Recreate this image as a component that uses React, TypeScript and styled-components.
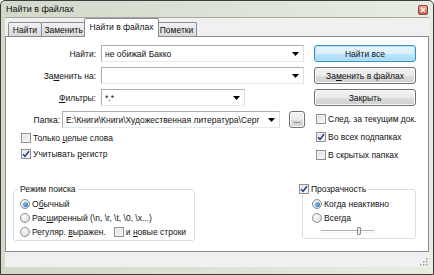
import styled, { createGlobalStyle } from "styled-components";

const GlobalStyle = createGlobalStyle`
  * { box-sizing: border-box; }
  html, body { margin: 0; padding: 0; background: #fff; }
  body { font-family: "Liberation Sans", Arial, sans-serif; font-size: 8.5px; }
`;

const Window = styled.div`
  width: 434px;
  height: 275px;
  border: 1px solid #3b3d3a;
  border-radius: 5px 5px 0 0;
  background: linear-gradient(90deg, #d2d9ca 0%, #dde3d6 55%, #e8ede2 100%);
  display: flex;
  flex-direction: column;
  padding: 0 4px 7px 4px;
  font-family: "Liberation Sans", Arial, sans-serif;
  font-size: 8.5px;
  color: #111;
`;

const TitleBar = styled.div`
  height: 16px;
  display: flex;
  align-items: center;
  justify-content: space-between;
  padding-left: 1px;
  font-size: 9px;
`;

const CloseButton = styled.div`
  width: 10px;
  height: 10px;
  margin-right: 1px;
  margin-top: 2px;
  border: 1px solid #8f4438;
  border-radius: 2px;
  background: linear-gradient(#eaa497, #c9604c);
  display: flex;
  align-items: center;
  justify-content: center;
`;

const Client = styled.div`
  flex: 1;
  background: #f0f0f0;
  border-top: 1px solid #a3aa9f;
  display: flex;
  flex-direction: column;
`;

const TabStrip = styled.div`
  height: 18px;
  display: flex;
  align-items: flex-end;
  padding-left: 3px;
`;

const Tab = styled.div<{ $w: number; $active?: boolean }>`
  width: ${(p) => p.$w}px;
  height: ${(p) => (p.$active ? 19 : 14)}px;
  margin-left: ${(p) => (p.$active ? -2 : -1)}px;
  margin-right: ${(p) => (p.$active ? -2 : 0)}px;
  margin-bottom: ${(p) => (p.$active ? -1 : 0)}px;
  position: relative;
  z-index: ${(p) => (p.$active ? 2 : 1)};
  border: 1px solid #898c95;
  border-bottom: none;
  border-radius: 2px 2px 0 0;
  background: ${(p) =>
    p.$active ? "#fff" : "linear-gradient(#f3f3f3, #e4e4e4 50%, #d9d9d9)"};
  display: flex;
  align-items: center;
  justify-content: center;
  padding-bottom: ${(p) => (p.$active ? 2 : 0)}px;
  white-space: nowrap;
  &:first-child {
    margin-left: 0;
  }
`;

const Panel = styled.div`
  flex: 1;
  background: #fff;
  border: 1px solid #898c95;
  padding: 8px 11px 0 0;
  display: flex;
  flex-direction: column;
`;

const StatusStrip = styled.div`
  height: 15px;
  display: flex;
  justify-content: flex-end;
  align-items: flex-end;
  padding: 0 1px 1px 0;
`;

const TopSection = styled.div`
  display: flex;
`;

const LeftCol = styled.div`
  width: 302px;
  display: flex;
  flex-direction: column;
`;

const RightCol = styled.div`
  width: 102px;
  margin-left: 6px;
  display: flex;
  flex-direction: column;
`;

const Fields = styled.div`
  display: flex;
  flex-direction: column;
  gap: 5px;
`;

const FieldRow = styled.div`
  display: grid;
  grid-template-columns: 90px auto;
  column-gap: 5px;
  height: 17px;
  align-items: center;
`;

const Label = styled.span<{ $w?: number }>`
  text-align: right;
  white-space: nowrap;
  ${(p) => (p.$w ? `width: ${p.$w}px;` : "")}
`;

const Combo = styled.div<{ $w: number }>`
  width: ${(p) => p.$w}px;
  height: 17px;
  border: 1px solid #abadb3;
  border-right-color: #dbdfe6;
  border-bottom-color: #e3e9ef;
  background: #fff;
  display: flex;
  align-items: center;
  padding: 0 4px 0 3px;
  gap: 4px;
`;

const ComboText = styled.span`
  flex: 1;
  overflow: hidden;
  white-space: nowrap;
`;

const FolderRow = styled.div`
  display: flex;
  align-items: center;
  height: 17px;
  gap: 2px;
`;

const Button = styled.div<{ $default?: boolean; $w?: number }>`
  height: 17px;
  ${(p) => (p.$w ? `width: ${p.$w}px;` : "")}
  border: 1px solid ${(p) => (p.$default ? "#3c8fc4" : "#707070")};
  border-radius: 3px;
  background: ${(p) =>
    p.$default
      ? "linear-gradient(#eaf6fd, #d9f0fc 50%, #bee6fd 51%, #a7d9f5)"
      : "linear-gradient(#f2f2f2, #ebebeb 50%, #dddddd 51%, #cfcfcf)"};
  box-shadow: inset 0 0 0 1px ${(p) => (p.$default ? "#b4e3fb" : "#fafafa")};
  display: flex;
  align-items: center;
  justify-content: center;
  white-space: nowrap;
`;

const Buttons = styled.div`
  display: flex;
  flex-direction: column;
  gap: 5px;
`;

const Checks = styled.div<{ $top: number; $left: number; $row: number }>`
  margin-top: ${(p) => p.$top}px;
  padding-left: ${(p) => p.$left}px;
  display: flex;
  flex-direction: column;
  & > * {
    height: ${(p) => p.$row}px;
  }
`;

const CheckRow = styled.label`
  display: flex;
  align-items: center;
  gap: 2px;
  white-space: nowrap;
`;

const Box = styled.span`
  width: 10px;
  height: 10px;
  border: 1px solid #8e8f8f;
  background: linear-gradient(135deg, #dcdcdc, #fbfbfb);
  box-shadow: inset 0 0 0 1px #f4f4f4;
  display: inline-flex;
  align-items: center;
  justify-content: center;
  flex: none;
`;

const RadioDot = styled.span<{ $on?: boolean }>`
  width: 10px;
  height: 10px;
  border-radius: 50%;
  border: 1px solid #8e8f8f;
  background: radial-gradient(circle at 35% 35%, #fdfdfd, #d2d2d2);
  display: inline-flex;
  align-items: center;
  justify-content: center;
  flex: none;
  &::after {
    content: "";
    display: ${(p) => (p.$on ? "block" : "none")};
    width: 5px;
    height: 5px;
    border-radius: 50%;
    background: radial-gradient(circle at 35% 35%, #7ec2f3, #1a5fae);
  }
`;

const GroupsRow = styled.div`
  margin-top: 19px;
  display: flex;
  align-items: flex-start;
`;

const Group = styled.fieldset<{ $w: number; $left: number; $pad: number }>`
  width: ${(p) => p.$w}px;
  margin: 0 0 0 ${(p) => p.$left}px;
  padding: 2px 0 1px ${(p) => p.$pad}px;
  border: 1px solid #d5dfe5;
  border-radius: 3px;
  display: flex;
  flex-direction: column;
  min-width: 0;
`;

const Legend = styled.legend<{ $shift: number }>`
  padding: 0 2px;
  margin-left: ${(p) => p.$shift}px;
  height: 12px;
  line-height: 12px;
  display: flex;
  align-items: center;
  gap: 2px;
  background: #fff;
`;

const RadioRow = styled.label`
  height: 14px;
  display: flex;
  align-items: center;
  gap: 2px;
  white-space: nowrap;
`;

const SliderRow = styled.div`
  height: 12px;
  padding-left: 9px;
  display: flex;
  align-items: center;
`;

const Track = styled.div`
  width: 53px;
  height: 3px;
  border-top: 1px solid #b3b3b3;
  border-bottom: 1px solid #f4f4f4;
  display: flex;
  align-items: center;
  padding-left: 36px;
`;

const Thumb = styled.span`
  width: 4px;
  height: 8px;
  border: 1px solid #8a8a8a;
  border-radius: 1px;
  background: linear-gradient(90deg, #f7f7f7, #dcdcdc);
`;

const Check = ({ on }: { on?: boolean }) => (
  <Box>
    {on && (
      <svg width="8" height="8" viewBox="0 0 8 8">
        <path d="M1 4.2 L3 6.4 L7 1.2" fill="none" stroke="#1d3b86" strokeWidth="1.5" />
      </svg>
    )}
  </Box>
);

const Arrow = () => (
  <svg width="7" height="4" viewBox="0 0 7 4">
    <path d="M0 0 H7 L3.5 4 Z" fill="#000" />
  </svg>
);

const FOLDER = "E:\\Книги\\Книги\\Художественная литература\\Серг";

export default function App() {
  return (
    <>
      <GlobalStyle />
      <Window>
        <TitleBar>
          <span>Найти в файлах</span>
          <CloseButton>
            <svg width="6" height="6" viewBox="0 0 6 6">
              <path d="M1 1 L5 5 M5 1 L1 5" stroke="#fff" strokeWidth="1.4" />
            </svg>
          </CloseButton>
        </TitleBar>
        <Client>
          <TabStrip>
            <Tab $w={34}>Найти</Tab>
            <Tab $w={45}>Заменить</Tab>
            <Tab $w={75} $active>
              Найти в файлах
            </Tab>
            <Tab $w={41}>Пометки</Tab>
          </TabStrip>
          <Panel>
            <TopSection>
              <LeftCol>
                <Fields>
                  <FieldRow>
                    <Label>Найти:</Label>
                    <Combo $w={203}>
                      <ComboText>не обижай Бакко</ComboText>
                      <Arrow />
                    </Combo>
                  </FieldRow>
                  <FieldRow>
                    <Label>
                      За<u>м</u>енить на:
                    </Label>
                    <Combo $w={203}>
                      <ComboText />
                      <Arrow />
                    </Combo>
                  </FieldRow>
                  <FieldRow>
                    <Label>
                      <u>Ф</u>ильтры:
                    </Label>
                    <Combo $w={144}>
                      <ComboText>*.*</ComboText>
                      <Arrow />
                    </Combo>
                  </FieldRow>
                  <FolderRow>
                    <Label $w={54}>Папка:</Label>
                    <Combo $w={218}>
                      <ComboText>{FOLDER}</ComboText>
                      <Arrow />
                    </Combo>
                    <Button $w={16} style={{ marginLeft: 7 }}>
                      ...
                    </Button>
                  </FolderRow>
                </Fields>
                <Checks $top={2} $left={15} $row={16}>
                  <CheckRow>
                    <Check />
                    <span>
                      Только <u>ц</u>елые слова
                    </span>
                  </CheckRow>
                  <CheckRow>
                    <Check on />
                    <span>
                      Учитывать <u>р</u>егистр
                    </span>
                  </CheckRow>
                </Checks>
              </LeftCol>
              <RightCol>
                <Buttons>
                  <Button $default>Найти все</Button>
                  <Button>
                    За<u>м</u>енить в файлах
                  </Button>
                  <Button>Закрыть</Button>
                </Buttons>
                <Checks $top={4} $left={2} $row={18}>
                  <CheckRow>
                    <Check />
                    <span>След. за текущим док.</span>
                  </CheckRow>
                  <CheckRow>
                    <Check on />
                    <span>Во всех подпапках</span>
                  </CheckRow>
                  <CheckRow>
                    <Check />
                    <span>В скрытых папках</span>
                  </CheckRow>
                </Checks>
              </RightCol>
            </TopSection>
            <GroupsRow>
              <Group $w={182} $left={7} $pad={6}>
                <Legend $shift={-2}>Режим поиска</Legend>
                <RadioRow>
                  <RadioDot $on />
                  <span>
                    О<u>б</u>ычный
                  </span>
                </RadioRow>
                <RadioRow>
                  <RadioDot />
                  <span>
                    Рас<u>ш</u>иренный {"(\\n, \\r, \\t, \\0, \\x...)"}
                  </span>
                </RadioRow>
                <RadioRow>
                  <RadioDot />
                  <span>
                    Регуляр. <u>в</u>ыражен.
                  </span>
                  <CheckRow style={{ marginLeft: 6 }}>
                    <Check />
                    <span>
                      и <u>н</u>овые строки
                    </span>
                  </CheckRow>
                </RadioRow>
              </Group>
              <Group $w={114} $left={107} $pad={9}>
                <Legend $shift={-15}>
                  <Check on />
                  <span>Прозрачность</span>
                </Legend>
                <RadioRow>
                  <RadioDot $on />
                  <span>Когда неактивно</span>
                </RadioRow>
                <RadioRow>
                  <RadioDot />
                  <span>Всегда</span>
                </RadioRow>
                <SliderRow>
                  <Track>
                    <Thumb />
                  </Track>
                </SliderRow>
              </Group>
            </GroupsRow>
          </Panel>
          <StatusStrip>
            <svg width="10" height="10" viewBox="0 0 10 10">
              {[
                [8, 2],
                [8, 5],
                [5, 5],
                [8, 8],
                [5, 8],
                [2, 8],
              ].map(([x, y]) => (
                <rect key={`${x}-${y}`} x={x} y={y} width="1.5" height="1.5" fill="#9a9a9a" />
              ))}
            </svg>
          </StatusStrip>
        </Client>
      </Window>
    </>
  );
}
